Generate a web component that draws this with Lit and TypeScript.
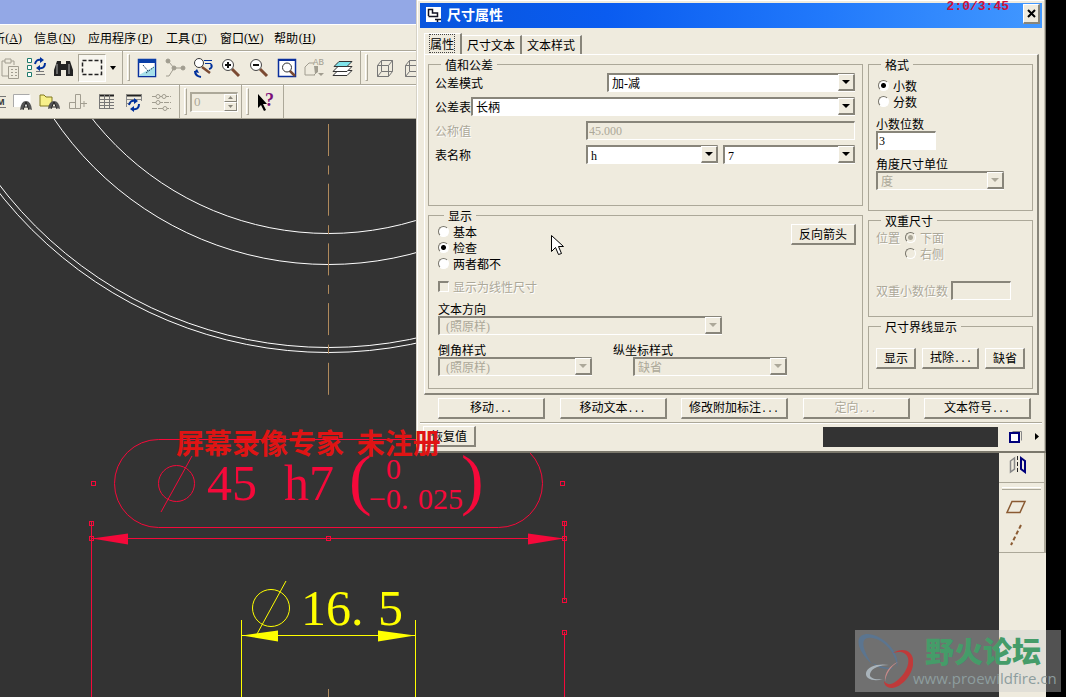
import { LitElement, html, svg, css, nothing } from "lit";
import { customElement } from "lit/decorators.js";
import { classMap } from "lit/directives/class-map.js";

const controls = css`
  * { box-sizing: border-box; }
  button, input, select, fieldset, legend { font: inherit; color: inherit; margin: 0; padding: 0; min-width: 0; }
  button { background: none; border: 0; }
  .push {
    height: 21px;
    line-height: 16px;
    padding: 0 7px;
    background: #efebde;
    border: 1px solid #fff;
    border-right: 2px solid #88857a;
    border-bottom: 2px solid #88857a;
    white-space: nowrap;
    color: #000;
  }
  .push:disabled { color: #aca899; text-shadow: 1px 1px 0 #fff; }
  .dots { font-family: "Liberation Mono", monospace; font-size: 10px; }
`;

/* ---------- drop-down list ---------- */
const combo = (id: string, options: string[], opts: { label?: string; disabled?: boolean; cls?: string } = {}) => html`
  <span class="combo ${opts.cls ?? ""}">
    <select id=${id} aria-label=${opts.label ?? nothing} ?disabled=${opts.disabled}>
      ${options.map((o) => html`<option>${o}</option>`)}
    </select>
    <span class=${classMap({ arrow: true, off: !!opts.disabled })}>
      <svg width="8" height="4" viewBox="0 0 8 4"><path d="M0 0h8L4 4z" fill="currentColor" /></svg>
    </span>
  </span>
`;

const radio = (name: string, text: string, checked = false, disabled = false) => html`
  <label class=${classMap({ choice: true, off: disabled })}>
    <input type="radio" name=${name} ?checked=${checked} ?disabled=${disabled} />${text}
  </label>
`;

const more = (text: string) => html`${text}<span class="dots">...</span>`;

/* ---------- toolbar glyphs, on a 24 x 24 grid ---------- */
const swirl = svg`
  <path d="M1 6q1-5 6-4M11 5q0 6-6 5" fill="none" stroke="#00309c" stroke-width="2"/>
  <path d="M6-1l4 3-4 3zM6 7l-4 3 4 3z" fill="#00309c"/>`;

const lens = (sign: unknown) => svg`
  <path d="M13 13l7 7" stroke="#7b4a32" stroke-width="3"/>
  <circle cx="9" cy="9" r="5.5" fill="#fff" stroke="#444"/>${sign}`;

const glyphs: Record<string, unknown> = {
  paste: svg`<g fill="none" stroke="#a19d90"><path d="M4 20V5h3M13 5h3v4M4 20h6M7 3h6v4H7z"/><path d="M10.500 10.500h10v12h-10zM13 13.500h2M17 13.500h2M13 16.500h2M17 16.500h2M13 19.500h2M17 19.500h2"/></g>`,
  tree: svg`<g fill="#fff" stroke="#1f7a6c"><path d="M3.500 2.500h4v4h-4zM3.500 9.500h4v4h-4zM3.500 16.500h4v4h-4z"/></g>
    <path d="M12 15.500h8M12 18.500h9" stroke="#777"/><g transform="translate(10 2)">${swirl}</g>`,
  binoculars: svg`<path d="M5 5h4v3h5V5h4l3 9v6h-7v-6h-5v6H2v-6z" fill="#222"/><path d="M5 8v10M17 8v10" stroke="#aaa" stroke-width="1"/>`,
  marquee: svg`<path d="M2.500 4.500h19v14h-19z" fill="none" stroke="#222" stroke-width="1.500" stroke-dasharray="4 2"/>`,
  sketch: svg`<path d="M3.500 3.500h17v17h-17z" fill="#fff" stroke="#0a2f9c" stroke-width="1.500"/><path d="M3 3h18v4H3z" fill="#0a3fa8"/>
    <path d="M4 19l16-9v10H4z" fill="#a7e0ea"/><path d="M8 9l5 6M11 17l8-6" stroke="#246" stroke-dasharray="2 1"/>`,
  graph: svg`<g stroke="#a19d90" fill="#a19d90"><path d="M6 6l5 6h9M11 12l-5 8H3" fill="none"/><circle cx="5" cy="5" r="2"/><circle cx="11" cy="12" r="2"/><circle cx="20" cy="12" r="2"/></g>`,
  find: svg`<circle cx="8" cy="7" r="4.500" fill="#fff" stroke="#333"/><path d="M11 11l8 6" stroke="#7b4a32" stroke-width="2.500"/>
    <path d="M13 4.500h8M14 7.500h6" stroke="#00309c"/><path d="M4 15q0 5 6 6M20 8q2 4-2 5" stroke="#00309c" stroke-width="2" fill="none"/><path d="M3 16l3-3 2 4z" fill="#00309c"/>`,
  zoomIn: lens(svg`<path d="M6 9h6M9 6v6" stroke="#111" stroke-width="2"/>`),
  zoomOut: lens(svg`<path d="M6 9h6" stroke="#111" stroke-width="2"/>`),
  refit: svg`<path d="M3.500 3.500h17v17h-17z" fill="#fff" stroke="#0a2f9c" stroke-width="1.500"/><path d="M3 3h18v2H3z" fill="#0a2f9c"/>
    <path d="M14 14l6 6" stroke="#7b4a32" stroke-width="2.500"/><circle cx="12" cy="11.500" r="4.500" fill="#fff" stroke="#333"/>`,
  saved: svg`<path d="M11 7H6l-4 4v8h10M14 11v5l-3 3" fill="none" stroke="#a19d90"/><path d="M11 10h4v6l-3 2z" fill="#a19d90"/><path d="M15 17h6l-3 3z" fill="#a19d90"/><text x="10" y="9" font-family="Liberation Mono" font-size="9" fill="#a19d90">AB</text>`,
  layers: svg`<g stroke="#333"><path d="M7 14.500h14l-5 5H2z" fill="#fff"/><path d="M7 10.500h14l-5 5H2z" fill="#fff"/><path d="M8 5.500h13l-5 5H3z" fill="#7fe3ea"/></g>`,
  cube: svg`<path d="M4.500 9.500h11v11h-11zM8.500 4.500h11v11h-11zM4.500 9.500l4-5M15.500 9.500l4-5M4.500 20.500l4-5M15.500 20.500l4-5" fill="none" stroke="#777"/>`,
  m: svg`<path d="M13 6.500h9M13 17.500h9" stroke="#777"/><text x="13" y="15" font-family="Liberation Sans" font-weight="700" font-size="9" fill="#333">M</text>`,
  annot: svg`<path d="M3.500 4.500h17V17h-17z" fill="#fff"/><path d="M3.500 17V4.500h16" fill="none" stroke="#aaa"/><path d="M10 20q1-9 6-9t6 9l-3-1-3-6-3 6z" fill="#555"/><path d="M13 20l3-8 3 8M14 17h4" stroke="#222" fill="none"/>`,
  folder: svg`<path d="M2 5h4l2 2h6v9H2z" fill="#f7f08a" stroke="#807820"/><path d="M10 19q1-8 6-8t6 8l-3-1-3-5-3 5z" fill="#555"/><path d="M13 19l3-7 3 7M14 17h4" stroke="#222" fill="none"/>`,
  block: svg`<path d="M3.500 12.500h6v6h-6zM9.500 4.500h5v14h-5zM15 13.500h6M18 11v6" fill="none" stroke="#a19d90"/>`,
  table: svg`<path d="M5 5.500h15" stroke="#222" stroke-width="2"/><path d="M5 9.500h15M5 12.500h15M5 15.500h15M5 18.500h15M5.500 5v14M10.500 5v14M15.500 5v14" stroke="#777"/>`,
  refresh: svg`<path d="M4 5.500h16" stroke="#222" stroke-width="2"/><path d="M4 9.500h16M4 13.500h5M4.500 5v12M19.500 5v6" stroke="#888"/><g transform="translate(6 9)">${swirl}</g>`,
  balloons: svg`<g stroke="#a19d90" fill="#efebde"><path d="M2 6.500h19M2 12.500h19M2 18.500h19" stroke-dasharray="5 1"/><circle cx="8" cy="6.500" r="2"/><circle cx="14" cy="6.500" r="2"/><circle cx="8" cy="12.500" r="2"/><circle cx="15" cy="18.500" r="2"/></g>`,
  help: svg`<path d="M4 4v14l3-3 3 6 2-1-3-6h4z" fill="#000"/><text x="11" y="16" font-family="Liberation Serif" font-weight="700" font-size="18" fill="#7b107b">?</text>`,
  mirror: svg`<path d="M6.500 8l4-3v11l-4 3z" fill="none" stroke="#888" stroke-width="1.500"/><path d="M13.500 3v18" stroke="#222" stroke-dasharray="4 2"/><path d="M17 5l4 3v11l-4-3z" fill="none" stroke="#00007b" stroke-width="2"/>`,
  plane: svg`<path d="M8 6.500h13l-5 11H3z" fill="none" stroke="#8a5a32" stroke-width="1.500"/>`,
  axis: svg`<path d="M17 2L7 22" stroke="#8a5a32" stroke-width="2" stroke-dasharray="4 2.500"/>`,
  box: svg`<path d="M9.500 6.500h9v9" fill="none" stroke="#888"/><path d="M7 8h9v9H7z" fill="#fff" stroke="#00007b" stroke-width="2"/>`,
};

const tool = (glyph: string, label: string, cls = "") => html`
  <button class="tool ${cls}" aria-label=${label}>
    <svg width="24" height="24" viewBox="0 0 24 24">${glyphs[glyph]}</svg>
  </button>
`;

/* ---------- dimension properties dialog ---------- */
@customElement("dimension-dialog")
export class DimensionDialog extends LitElement {
  static styles = [
    controls,
    css`
      :host {
        display: flex;
        flex-direction: column;
        padding: 3px 4px 0;
        background: #efebde;
        border-bottom: 2px solid #7b786c;
        box-shadow: inset 1px 0 0 #d6d2c6, inset 2px 0 0 #fff, inset -1px 0 0 #77746a, inset -2px 0 0 #c4c0b4, inset 0 1px 0 #fff;
      }
      .title {
        display: flex;
        align-items: center;
        gap: 6px;
        height: 25px;
        padding: 0 2px 2px 6px;
        background: linear-gradient(90deg, #0855dd, #0a5cf0 30%, #2179fb 65%, #4298ff);
        color: #fff;
        font-size: 14px;
        font-weight: 700;
      }
      .title h1 { flex: 1; margin: 0; font: inherit; }
      .close {
        display: grid;
        place-items: center;
        width: 17px;
        height: 20px;
        background: #efebde;
        border: 1px solid #fff;
        border-right: 2px solid #88857a;
        border-bottom: 2px solid #88857a;
      }
      .tabs { display: flex; align-items: flex-end; margin: 5px 4px 0; }
      .tab {
        height: 19px;
        line-height: 18px;
        padding: 0 5px;
        border-top: 1px solid #fff;
        border-right: 2px solid #88857a;
      }
      .tab.on { height: 21px; line-height: 17px; padding: 0 6px 0 5px; border-left: 1px solid #fff; }
      .tab.on span { outline: 1px dotted #444; }
      .panel {
        display: flex;
        gap: 5px;
        margin: 0 3px 0 4px;
        padding: 4px 4px 4px 3px;
        border: 1px solid #fff;
        border-right: 2px solid #88857a;
        border-bottom: 2px solid #88857a;
      }
      .col { display: flex; flex-direction: column; gap: 4px; width: 165px; }
      .col.wide { flex: 1; }
      fieldset {
        border: 1px solid #aca899;
        padding: 0 7px;
      }
      legend { margin-left: 5px; padding: 0 4px; line-height: 12px; }
      .col.wide legend { margin-left: 6px; }
      .tolerance { height: 147px; padding-left: 6px; }
      .display { height: 179px; padding: 2px 6px 0 9px; }
      .display legend { margin-left: 3px; }
      .format { height: 152px; padding-top: 7px; }
      .dual { height: 102px; }
      .witness { height: 68px; padding-top: 15px; }
      .row { display: flex; align-items: center; justify-content: space-between; height: 24px; }
      .row .grow { flex: 1; }
      .pair { display: flex; gap: 5px; width: 269px; }
      .pair .combo { flex: 1; }
      .w248 { width: 248px; }
      .w269 { width: 269px; }
      .w284 { width: 284px; }
      .w154 { width: 154px; }
      .w128 { width: 128px; }
      .w60 { width: 60px; }
      .off { color: #aca899; text-shadow: 1px 1px 0 #fff; }
      .combo { display: grid; height: 19px; }
      .combo > * { grid-area: 1 / 1; }
      select, .box {
        display: block;
        appearance: none;
        width: 100%;
        height: 19px;
        padding: 2px 3px 0;
        border: 2px solid #88857a;
        border-right: 1px solid #fff;
        border-bottom: 1px solid #fff;
        border-radius: 0;
        background: #fff;
        color: #000;
        font-family: "Liberation Serif", "Noto Sans CJK SC", serif;
        font-size: 12px;
        line-height: 14px;
      }
      .box { padding: 1px 1px 0; }
      select:disabled, .box:disabled { background: #efebde; color: #aca899; opacity: 1; }
      .indent select { padding-left: 6px; }
      .arrow {
        display: grid;
        place-items: center;
        justify-self: end;
        align-self: center;
        width: 17px;
        height: 17px;
        background: #efebde;
        border: 1px solid #fff;
        border-right: 2px solid #88857a;
        border-bottom: 2px solid #88857a;
        pointer-events: none;
        color: #000;
      }
      .arrow.off { color: #aca899; }
      .choice { display: flex; align-items: center; gap: 4px; height: 16px; line-height: 16px; }
      .choice input { appearance: none; width: 11px; height: 11px; }
      .choice input[type="radio"] {
        border-radius: 50%;
        border: 1px solid #77746a;
        border-right-color: #fff;
        border-bottom-color: #fff;
        background: #fff;
      }
      .choice input[type="radio"]:checked { background: radial-gradient(circle, #000 2px, #fff 3px); }
      .choice.off input { background: #efebde; }
      .choice.off input[type="radio"]:checked { background: radial-gradient(circle, #aca899 2px, #efebde 3px); }
      .choice input[type="checkbox"] {
        border: 2px solid #88857a;
        border-right: 1px solid #fff;
        border-bottom: 1px solid #fff;
      }
      .head { display: flex; justify-content: space-between; align-items: flex-start; }
      .check { margin-top: 7px; }
      .field { display: flex; flex-direction: column; line-height: 14px; margin-top: 7px; }
      .radios { padding-left: 2px; }
      .styles { display: flex; gap: 21px; }
      .styles .field { margin-top: 8px; }
      .styles .combo.shift { margin-left: 20px; }
      .position { display: flex; gap: 5px; line-height: 16px; padding-top: 3px; }
      .decimals { display: flex; align-items: center; gap: 3px; margin-top: 19px; }
      .trio { display: flex; gap: 6px; }
      .actions { display: flex; justify-content: space-between; padding: 3px 11px 3px 18px; }
      .actions .push { width: 107px; }
      .foot {
        display: flex;
        align-items: center;
        height: 30px;
        padding: 0 3px;
        border-top: 1px solid #aca899;
        box-shadow: inset 0 1px 0 #fff;
      }
      .foot .message { width: 175px; height: 20px; margin-left: auto; background: #333; }
      .tool { display: grid; margin-left: 5px; }
      .next { margin-left: 8px; line-height: 0; }
    `,
  ];

  render() {
    return html`
      <header class="title">
        <svg width="15" height="15" viewBox="0 0 15 15">
          <path d="M0 0h15v15H0z" fill="#fff" />
          <path d="M2.500 9V2.500h4V6h5v3.500h-9M9 12.500h6M11.500 12v3" fill="none" stroke="#112" stroke-width="1.500" />
        </svg>
        <h1>尺寸属性</h1>
        <button class="close" aria-label="关闭">
          <svg width="9" height="9" viewBox="0 0 9 9"><path d="M1 1l7 7M8 1L1 8" stroke="#000" stroke-width="2" /></svg>
        </button>
      </header>
      <div class="tabs" role="tablist">
        <button class="tab on" role="tab" aria-selected="true"><span>属性</span></button>
        <button class="tab" role="tab">尺寸文本</button>
        <button class="tab" role="tab">文本样式</button>
      </div>
      <div class="panel">
        <div class="col wide">
          <fieldset class="tolerance">
            <legend>值和公差</legend>
            <div class="row"><label for="mode">公差模式</label>${combo("mode", ["加-减"], { cls: "w248" })}</div>
            <div class="row"><label for="tol">公差表</label>${combo("tol", ["长柄"], { cls: "grow" })}</div>
            <div class="row">
              <label class="off" for="nominal">公称值</label>
              <span class="w269"><input id="nominal" class="box" value="45.000" disabled /></span>
            </div>
            <div class="row">
              <label for="letter">表名称</label>
              <div class="pair">${combo("letter", ["h"])}${combo("grade", ["7"], { label: "等级" })}</div>
            </div>
          </fieldset>
          <fieldset class="display">
            <legend>显示</legend>
            <div class="head">
              <div>${radio("show", "基本")}${radio("show", "检查", true)}${radio("show", "两者都不")}</div>
              <button class="push">反向箭头</button>
            </div>
            <label class="choice off check"><input type="checkbox" disabled />显示为线性尺寸</label>
            <div class="field">
              <label for="dir">文本方向</label>${combo("dir", ["(照原样)"], { disabled: true, cls: "w284 indent" })}
            </div>
            <div class="styles">
              <div class="field">
                <label for="chamfer">倒角样式</label>${combo("chamfer", ["(照原样)"], { disabled: true, cls: "w154 indent" })}
              </div>
              <div class="field">
                <label for="ord">纵坐标样式</label>${combo("ord", ["缺省"], { disabled: true, cls: "w154 shift" })}
              </div>
            </div>
          </fieldset>
        </div>
        <div class="col">
          <fieldset class="format">
            <legend>格式</legend>
            <div class="radios">${radio("format", "小数", true)}${radio("format", "分数")}</div>
            <div class="field">
              <label for="places">小数位数</label>
              <span class="w60"><input id="places" class="box" value="3" /></span>
            </div>
            <div class="field">
              <label for="unit">角度尺寸单位</label>${combo("unit", ["度"], { disabled: true, cls: "w128" })}
            </div>
          </fieldset>
          <fieldset class="dual">
            <legend>双重尺寸</legend>
            <div class="position">
              <span class="off">位置</span>
              <div>${radio("dual", "下面", true, true)}${radio("dual", "右侧", false, true)}</div>
            </div>
            <div class="decimals">
              <label class="off" for="dualplaces">双重小数位数</label>
              <span class="w60"><input id="dualplaces" class="box" disabled /></span>
            </div>
          </fieldset>
          <fieldset class="witness">
            <legend>尺寸界线显示</legend>
            <div class="trio">
              <button class="push">显示</button>
              <button class="push">${more("拭除")}</button>
              <button class="push">缺省</button>
            </div>
          </fieldset>
        </div>
      </div>
      <div class="actions">
        <button class="push">${more("移动")}</button>
        <button class="push">${more("移动文本")}</button>
        <button class="push">${more("修改附加标注")}</button>
        <button class="push" disabled>${more("定向")}</button>
        <button class="push">${more("文本符号")}</button>
      </div>
      <footer class="foot">
        <button class="push">恢复值</button>
        <span class="message"></span>
        ${tool("box", "拉伸")}
        <button class="next" aria-label="更多">
          <svg width="4" height="7" viewBox="0 0 4 7"><path d="M0 0l4 3.500L0 7z" /></svg>
        </button>
      </footer>
    `;
  }
}

/* ---------- drawing area; all shapes share window coordinates ---------- */
@customElement("drawing-canvas")
export class DrawingCanvas extends LitElement {
  static styles = css`
    :host { display: block; overflow: hidden; background: #333; }
    svg { display: block; width: 100%; height: 100%; }
    .model { fill: none; stroke: #fff; }
    .centre { stroke: #b08a5c; stroke-dasharray: 32 9.500 9 9.200; }
    .red { stroke: #f5093a; fill: #f5093a; }
    .yellow { stroke: #ffff00; fill: #ffff00; }
    .thin { fill: none; }
    text { stroke: none; font-family: "Liberation Serif", serif; font-size: 50px; }
    .small { font-size: 30px; }
    .paren { font-size: 68px; }
  `;

  private handles = [
    [93, 483], [562, 483], [91, 523], [564, 523], [91, 538], [328, 538], [564, 538], [564, 600], [564, 632],
  ];

  render() {
    return html`
      <svg>
        <g transform="translate(0 -119)">
          <g class="model">
            ${[300.5, 331.5, 414.5, 419.5].map((r) => svg`<circle cx="328.500" cy="-67" r=${r} />`)}
          </g>
          <path class="centre" d="M328.500 124V396M328.500 689v300" />
          <g class="red">
            <rect class="thin" x="114.500" y="439.500" width="428" height="88" rx="44" />
            <path class="thin" d="M91.500 522V1200M564.500 522V600M564.500 632V1200M91.500 538.500H564.500" />
            <path stroke="none" d="M92 538.500l36-5v11zM564 538.500l-36-5v11z" />
            ${this.handles.map(([x, y]) => svg`<rect class="thin" x=${x - 1.5} y=${y - 1.5} width="4" height="4" />`)}
            <circle class="thin" cx="176.500" cy="483.500" r="18" />
            <path class="thin" d="M192 456L161 512" />
            <text x="207" y="500">45</text>
            <text x="284" y="500">h7</text>
            <text class="paren" x="349" y="502">(</text>
            <text class="small" x="386" y="479">0</text>
            <text class="small" x="369" y="509">−</text>
            <text class="small" x="386" y="509">0.</text>
            <text class="small" x="418" y="509">025</text>
            <text class="paren" x="461" y="502">)</text>
          </g>
          <g class="yellow">
            <circle class="thin" cx="271" cy="608" r="18.500" />
            <path class="thin" d="M286 581L257 634M241.500 620V1200M415.500 620V1200M241.500 635.500H415.500" />
            <path stroke="none" d="M242 635.500l36-5v11zM415 635.500l-37-5v11z" />
            <text x="301" y="625">16.</text>
            <text x="378" y="625">5</text>
          </g>
        </g>
      </svg>
    `;
  }
}

@customElement("app-root")
export class AppRoot extends LitElement {
  static styles = [
    controls,
    css`
      :host {
        display: block;
        position: relative;
        height: 100vh;
        overflow: hidden;
        padding-right: 20px;
        background: #000;
        font: 12px "Noto Sans CJK SC", sans-serif;
        color: #000;
      }
      .window { display: flex; flex-direction: column; height: 100%; background: #efebde; }
      .strip { flex: none; height: 24px; background: #93a8e6; }
      .menu {
        display: flex;
        gap: 12px;
        height: 27px;
        line-height: 26px;
        border-top: 1px solid #fff;
        border-bottom: 1px solid #aca899;
      }
      .menu button { display: flex; flex: none; }
      .key { width: 18px; font-family: "Liberation Serif", serif; text-align: center; }
      .cut { justify-content: flex-end; overflow: hidden; }
      .menu .cut { width: 22px; }
      .bar { display: flex; height: 34px; border-bottom: 1px solid #aca899; box-shadow: inset 0 1px 0 #fff; }
      .group { display: flex; flex: none; align-items: center; padding-right: 3px; border-right: 1px solid #aca899; }
      .group.last { border: 0; }
      .grip { width: 3px; height: 27px; margin: 0 3px 0 4px; border: 1px solid #fff; border-right-color: #aca899; border-bottom-color: #aca899; }
      .tool { display: flex; flex: none; align-items: center; justify-content: center; width: 28px; height: 28px; }
      .tool svg { flex: none; }
      .tool.on { background: #f7f5ee; border: 1px solid #aca899; border-right-color: #fff; border-bottom-color: #fff; }
      .tool.cut { width: 22px; justify-content: flex-end; }
      .tool.edge { width: 8px; justify-content: flex-end; overflow: hidden; }
      .drop { width: 13px; line-height: 0; }
      .spin {
        display: flex;
        justify-content: space-between;
        width: 48px;
        height: 20px;
        border: 2px solid #aca899;
        border-right: 1px solid #fff;
        border-bottom: 1px solid #fff;
      }
      .spin input { width: 28px; border: 0; padding: 0 2px; background: none; color: #aca899; font: 13px "Liberation Serif", serif; }
      .steps { display: flex; flex-direction: column; width: 13px; }
      .steps button { flex: 1; display: grid; place-items: center; border: 1px solid #fff; border-right-color: #88857a; border-bottom-color: #88857a; }
      .work { display: flex; flex: 1; min-height: 0; }
      drawing-canvas { flex: 1; min-width: 0; }
      .side { width: 47px; }
      .set {
        display: flex;
        flex-direction: column;
        padding-left: 3px;
        border-right: 2px solid #aca899;
        border-bottom: 1px solid #aca899;
      }
      .set.upper { height: 364px; justify-content: flex-end; padding-bottom: 3px; }
      .set.datum { height: 70px; padding-top: 4px; }
      .rail { height: 3px; margin-right: 3px; margin-bottom: 3px; border-bottom: 1px solid #aca899; border-top: 1px solid #fff; }
      .dialog { position: absolute; top: 0; right: 20px; width: 630px; height: 453px; }
      .pointer { position: absolute; left: 551px; top: 235px; }
      .clock { position: absolute; top: 0; right: 57px; color: #d0103a; font: 700 13px/13px "Liberation Mono", monospace; }
      .notice { position: absolute; left: 176px; top: 427px; margin: 0; color: #e01414; font-size: 28px; font-weight: 700; line-height: 30px; white-space: pre; }
      .mark {
        position: absolute;
        right: 5px;
        bottom: 5px;
        display: flex;
        width: 206px;
        height: 62px;
        background: rgba(205, 205, 205, 0.4);
      }
      .mark svg { flex: none; }
      .brand { color: #459c69; font-size: 29px; font-weight: 900; line-height: 30px; padding: 5px 0 0 12px; white-space: nowrap; }
      .url { display: block; color: #8d9d9e; font: 15px/26px "Open Sans", sans-serif; }
    `,
  ];

  private menus = [
    ["析", "A"], ["信息", "N"], ["应用程序", "P"], ["工具", "T"], ["窗口", "W"], ["帮助", "H"],
  ];

  render() {
    return html`
      <div class="window">
        <div class="strip"></div>
        <nav class="menu">
          ${this.menus.map(([text, key], i) => html`
            <button class=${classMap({ cut: i === 0 })}>${text}<span class="key">(<u>${key}</u>)</span></button>
          `)}
        </nav>
        <div class="bar">
          <div class="group">
            ${tool("paste", "粘贴", "cut")}${tool("tree", "再生")}${tool("binoculars", "查找")}${tool("marquee", "选取", "on")}
            <button class="drop" aria-label="选取选项"><svg width="6" height="4"><path d="M0 0h6L3 4z" /></svg></button>
          </div>
          <div class="group">
            <span class="grip"></span>
            ${tool("sketch", "重画")}${tool("graph", "旋转中心")}${tool("find", "定向模式")}${tool("zoomIn", "放大")}
            ${tool("zoomOut", "缩小")}${tool("refit", "重新调整")}${tool("saved", "视图列表")}${tool("layers", "层")}
          </div>
          <div class="group last"><span class="grip"></span>${tool("cube", "线框")}${tool("cube", "隐藏线")}</div>
        </div>
        <div class="bar">
          <div class="group">
            ${tool("m", "模型", "edge")}${tool("annot", "注释")}${tool("folder", "打开注释")}${tool("block", "移动")}
            ${tool("table", "表")}${tool("refresh", "更新表")}${tool("balloons", "球标")}
          </div>
          <div class="group">
            <span class="grip"></span>
            <span class="spin">
              <input aria-label="页面" value="0" disabled />
              <span class="steps">
                <button aria-label="增加"><svg width="5" height="3"><path d="M0 3h5L2.500 0z" fill="#88857a" /></svg></button>
                <button aria-label="减少"><svg width="5" height="3"><path d="M0 0h5L2.500 3z" fill="#88857a" /></svg></button>
              </span>
            </span>
          </div>
          <div class="group"><span class="grip"></span>${tool("help", "帮助")}</div>
        </div>
        <div class="work">
          <drawing-canvas></drawing-canvas>
          <aside class="side">
            <div class="set upper">${tool("mirror", "镜像")}</div>
            <div class="set datum"><span class="rail"></span>${tool("plane", "基准平面")}${tool("axis", "基准轴")}</div>
          </aside>
        </div>
      </div>
      <dimension-dialog class="dialog" role="dialog" aria-label="尺寸属性"></dimension-dialog>
      <svg class="pointer" width="13" height="21" viewBox="0 0 13 21">
        <path d="M.5.5v16l4-4 3 7 3-1-3-7h5z" fill="#fff" stroke="#000" />
      </svg>
      <span class="clock">2:0/3:45</span>
      <p class="notice">屏幕录像专家  未注册</p>
      <div class="mark">
        <svg width="58" height="62" viewBox="0 0 58 62">
          <path d="M42 37C46 22 26 3 11 4-2 6 3 22 17 34 8 21 5 9 13 8c12-2 28 13 29 29z" fill="#5b7590" />
          <path d="M17 33c7 6 15 7 22 5-8 0-15-2-22-5z" fill="#5b7590" />
          <path d="M38 23c8-5 18-4 20 6 2 13-10 28-21 29-5 0-8-3-8-7 3 4 7 4 11 1 9-6 15-17 13-24-2-6-8-7-15-5z" fill="#c03a3a" />
          <path d="M34 35c-10-2-22 1-23 8-1 6 8 9 17 6-8 1-14-1-13-5 1-6 10-9 19-9z" fill="#a9b3ba" />
          <path d="M43 32c-8 3-14 11-13 20 1-8 5-15 13-20z" fill="#c98a8a" />
        </svg>
        <div>
          <div class="brand">野火论坛</div>
          <span class="url">www.proewildfire.cn</span>
        </div>
      </div>
    `;
  }
}
